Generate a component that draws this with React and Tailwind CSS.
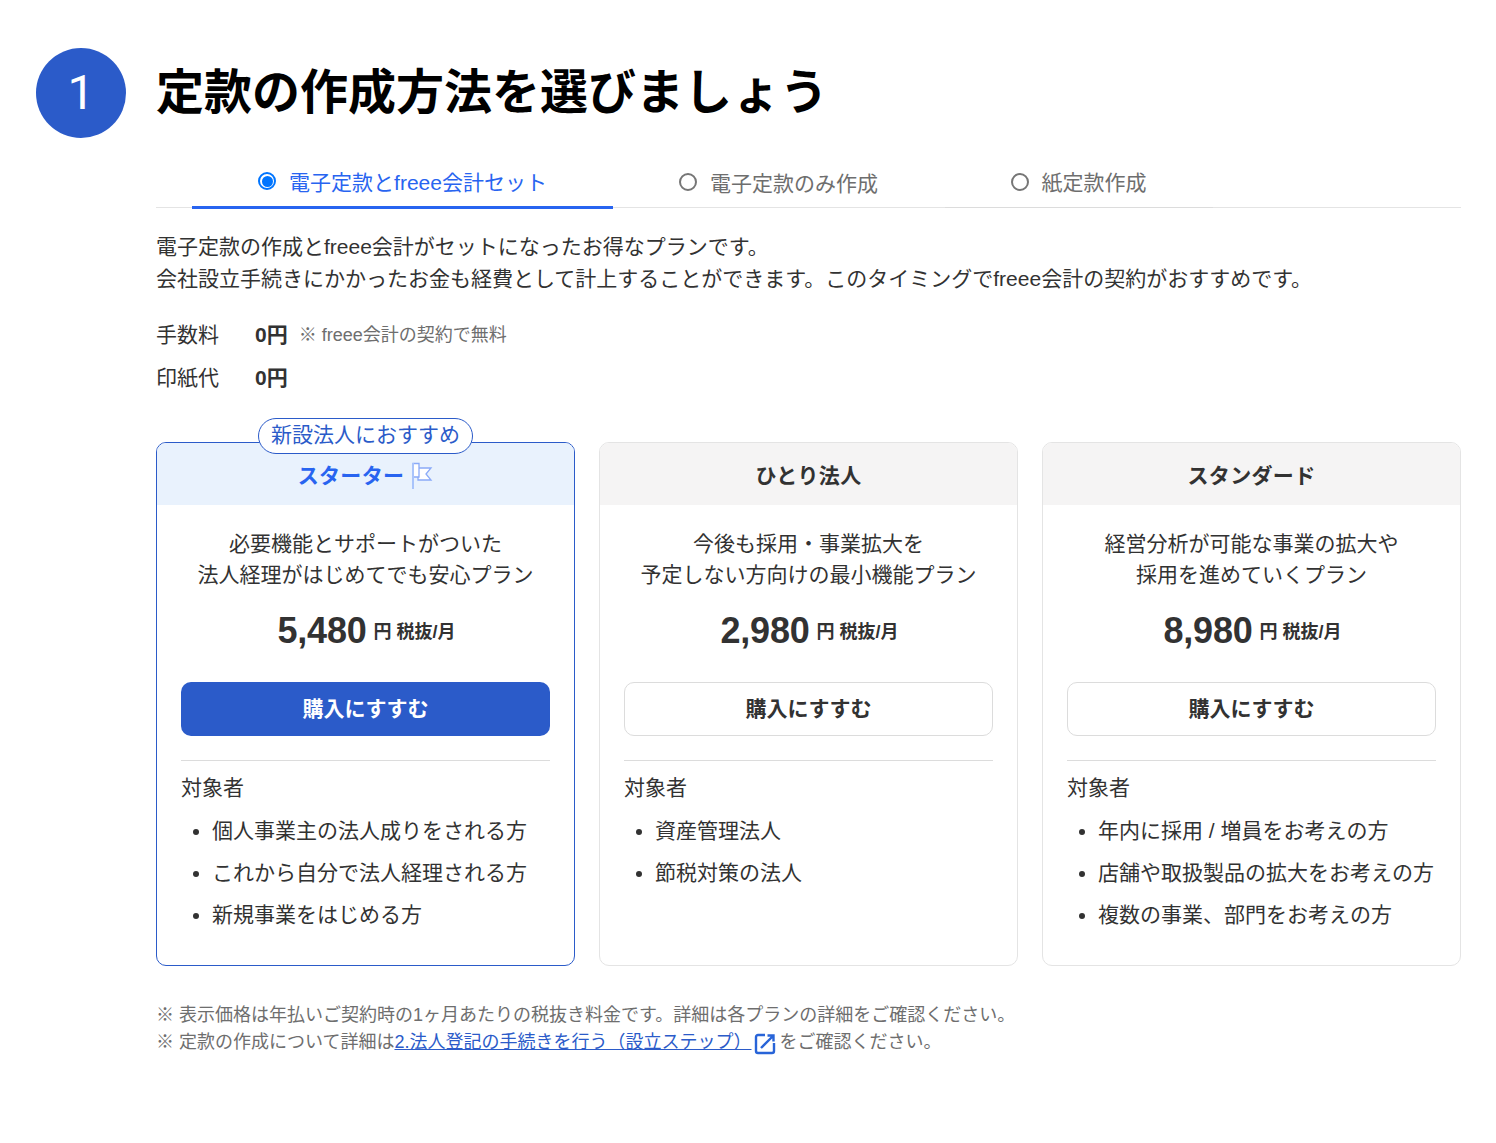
import React from 'react';

const plans = [
  {
    name: 'スターター',
    featured: true,
    desc: ['必要機能とサポートがついた', '法人経理がはじめてでも安心プラン'],
    price: '5,480',
    items: ['個人事業主の法人成りをされる方', 'これから自分で法人経理される方', '新規事業をはじめる方'],
  },
  {
    name: 'ひとり法人',
    desc: ['今後も採用・事業拡大を', '予定しない方向けの最小機能プラン'],
    price: '2,980',
    items: ['資産管理法人', '節税対策の法人'],
  },
  {
    name: 'スタンダード',
    desc: ['経営分析が可能な事業の拡大や', '採用を進めていくプラン'],
    price: '8,980',
    items: ['年内に採用 / 増員をお考えの方', '店舗や取扱製品の拡大をお考えの方', '複数の事業、部門をお考えの方'],
  },
];

function FlagIcon() {
  return (
    <svg width="22" height="28" viewBox="0 0 22 28" fill="none" className="ml-[7px]">
      <path d="M7 6h13l-5 6 5 6H7v-3" stroke="#8aaaf8" strokeWidth="1.300" fill="#fff" />
      <path d="M2 1.500h6v13.500H2z" stroke="#8aaaf8" strokeWidth="1.300" fill="#fff" />
      <path d="M2 1v26" stroke="#a9c4fb" strokeWidth="2" />
    </svg>
  );
}

function Radio({ checked }) {
  if (checked) {
    return (
      <span className="w-[18px] h-[18px] mb-[3px] rounded-full border-2 border-[#0075ff] flex items-center justify-center">
        <span className="w-[11px] h-[11px] rounded-full bg-[#0075ff]" />
      </span>
    );
  }
  return <span className="w-[18px] h-[18px] mb-[3px] -ml-px rounded-full border-2 border-[#767676]" />;
}

function PlanCard({ plan }) {
  const { featured } = plan;
  return (
    <div className={`relative w-[419px] h-[524px] rounded-[10px] border ${featured ? 'border-[#2b5bc9]' : 'border-[#e4e4e4]'}`}>
      {featured && (
        <div className="absolute top-[-25px] left-[101px] w-[215px] h-[36px] rounded-full border border-[#2b5bc9] bg-white text-[#2b5bc9] text-[21px] leading-[31px] text-center">
          新設法人におすすめ
        </div>
      )}
      <div className={`h-[62px] pt-[3px] rounded-t-[9px] flex items-center justify-center text-[21px] tracking-[0.35px] font-bold ${featured ? 'bg-[#e9f2fd] text-[#2864f0]' : 'bg-[#f5f4f4] text-[#323232]'}`}>
        {plan.name}
        {featured && <FlagIcon />}
      </div>
      <div className="px-6 pt-[23px]">
        <div className="text-center text-[21px] leading-[31px] text-[#323232]">
          {plan.desc.map((line) => (
            <div key={line}>{line}</div>
          ))}
        </div>
        <div className="mt-[16px] h-[50px] flex items-center justify-center font-bold text-[#323232]">
          <span className="ml-[2px] text-[36px] leading-none tracking-[-0.2px]">{plan.price}</span>
          <span className="ml-[7px] text-[18px] mt-[2px]">円</span>
          <span className="ml-[5px] text-[18px] mt-[2px]">税抜/月</span>
        </div>
        <button className={`mt-[26px] w-full h-[54px] rounded-[10px] text-[21px] font-bold ${featured ? 'bg-[#2b5bc9] text-white' : 'bg-white border border-[#dcdcdc] text-[#323232]'}`}>
          購入にすすむ
        </button>
        <div className="mt-6 border-t border-[#dcdcdc] pt-[11px]">
          <div className="text-[21px] leading-[32px] text-[#323232]">対象者</div>
          <ul className="mt-[11px] flex flex-col gap-[10px] list-disc pl-[31px] text-[21px] leading-[32px] text-[#323232]">
            {plan.items.map((item) => (
              <li key={item}>{item}</li>
            ))}
          </ul>
        </div>
      </div>
    </div>
  );
}

export default function App() {
  return (
    <div className="min-h-[1143px] bg-white pl-9 pr-[35px] pt-12 font-['Liberation_Sans','Noto_Sans_CJK_JP',sans-serif]">
      <div className="flex items-center gap-[30px]">
        <div className="w-[90px] h-[90px] rounded-full bg-[#2b5bc9] text-white text-[48px] font-['Roboto',sans-serif] flex items-center justify-center">1</div>
        <h1 className="text-[48px] font-bold text-black leading-none -mt-[1px]">定款の作成方法を選びましょう</h1>
      </div>

      <div className="ml-[120px]">
        <div className="mt-[21px] h-[49px] border-b border-[#e4e4e4] flex">
          <div className="ml-9 w-[421px] h-[50px] border-b-[3px] border-[#2864f0] flex items-center justify-center gap-[13px] text-[#2864f0] text-[21px]">
            <Radio checked />
            <span>電子定款とfreee会計セット</span>
          </div>
          <div className="w-[332px] h-[49px] flex items-center justify-center gap-[13px] text-[#6e6e6e] text-[21px]">
            <Radio />
            <span>電子定款のみ作成</span>
          </div>
          <div className="w-[268px] h-[49px] border-b border-[#dcdcdc] flex items-center justify-center gap-[13px] text-[#6e6e6e] text-[21px]">
            <Radio />
            <span>紙定款作成</span>
          </div>
        </div>

        <div className="mt-[23px] text-[21px] leading-[32px] text-[#323232]">
          <p>電子定款の作成とfreee会計がセットになったお得なプランです。</p>
          <p>会社設立手続きにかかったお金も経費として計上することができます。このタイミングでfreee会計の契約がおすすめです。</p>
        </div>

        <div className="mt-[23px] flex items-center text-[21px] leading-[32px] text-[#323232]">
          <span className="w-[99px]">手数料</span>
          <span className="font-bold">0円</span>
          <span className="ml-[11px] text-[18px] text-[#6e6e6e] mt-[1px]">※ freee会計の契約で無料</span>
        </div>
        <div className="mt-[11px] flex items-center text-[21px] leading-[32px] text-[#323232]">
          <span className="w-[99px]">印紙代</span>
          <span className="font-bold">0円</span>
        </div>

        <div className="mt-[48px] flex gap-6">
          {plans.map((plan) => (
            <PlanCard key={plan.name} plan={plan} />
          ))}
        </div>

        <div className="mt-[36px] text-[18px] leading-[27px] text-[#6e6e6e]">
          <p>※ 表示価格は年払いご契約時の1ヶ月あたりの税抜き料金です。詳細は各プランの詳細をご確認ください。</p>
          <p className="flex items-center">
            ※ 定款の作成について詳細は
            <a href="#" className="text-[#2b5bc9] underline flex items-center">2.法人登記の手続きを行う（設立ステップ） </a>
            <svg width="22" height="22" viewBox="0 0 22 22" fill="none" className="ml-[3px] mr-[3px] mt-[2px]">
              <path d="M11 2H4a2 2 0 0 0-2 2v14a2 2 0 0 0 2 2h14a2 2 0 0 0 2-2v-8" stroke="#2864d8" strokeWidth="2.400" />
              <path d="M7 15 19 3M13.500 2.500H19.500V8.500" stroke="#2864d8" strokeWidth="2.400" />
            </svg>
            をご確認ください。
          </p>
        </div>
      </div>
    </div>
  );
}
